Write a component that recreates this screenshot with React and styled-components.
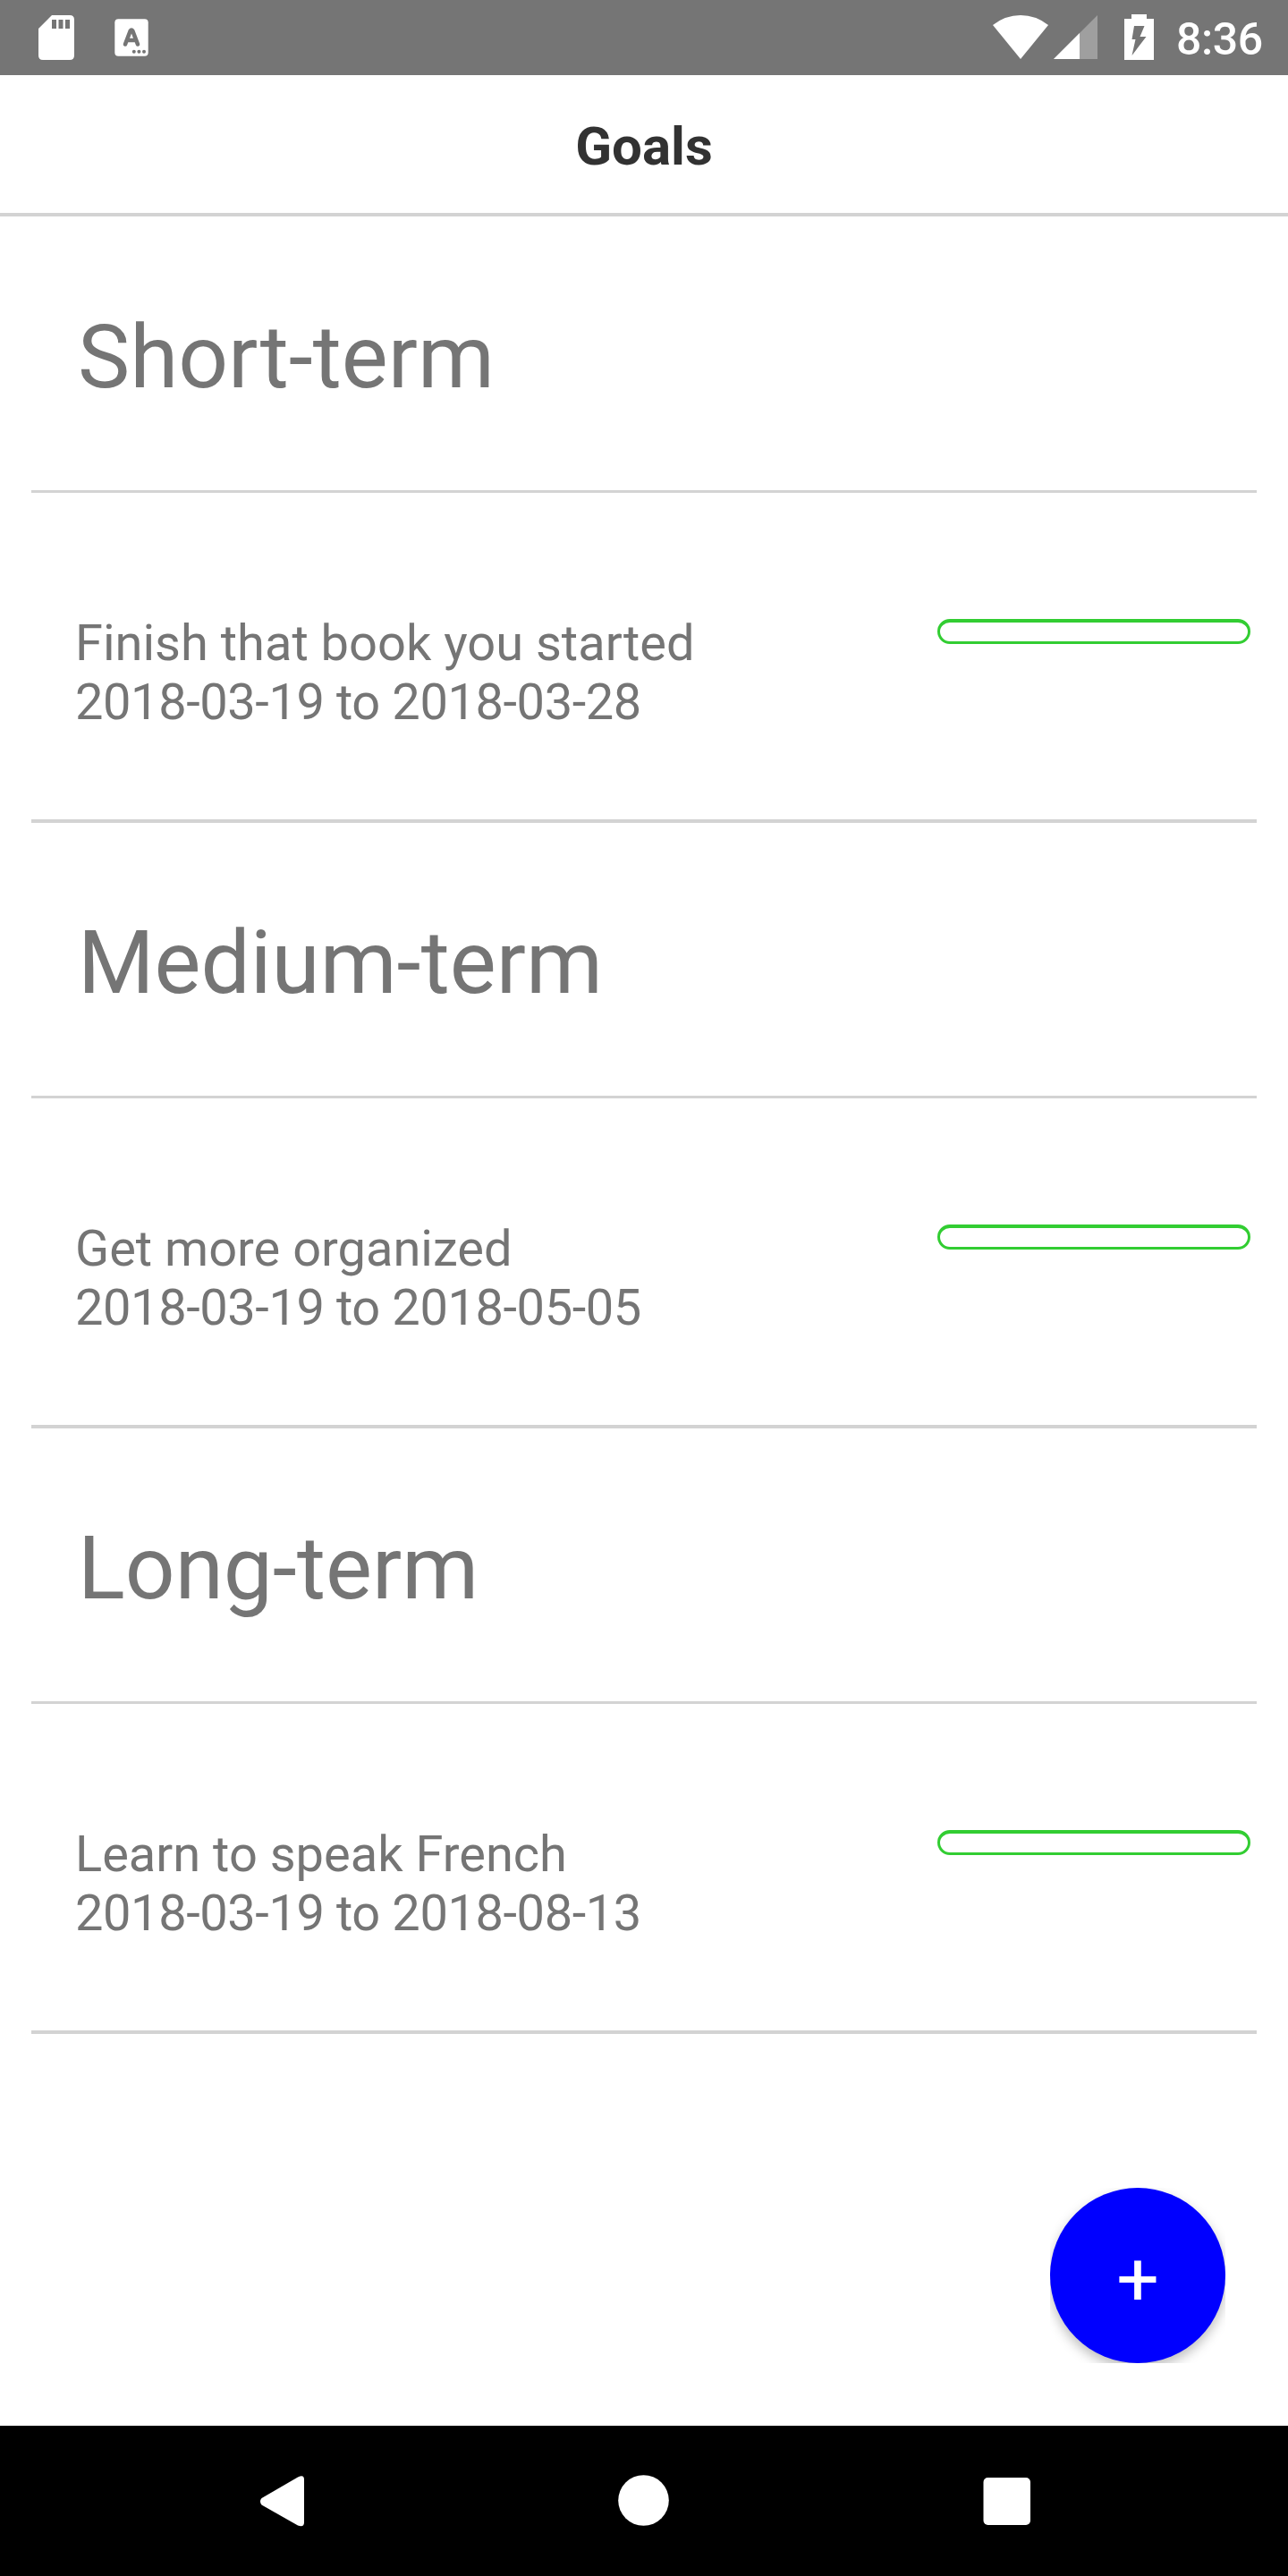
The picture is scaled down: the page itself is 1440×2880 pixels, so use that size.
import React from "react";
import styled, { createGlobalStyle } from "styled-components";

const GlobalStyle = createGlobalStyle`
  *, *::before, *::after { box-sizing: border-box; }
  body { margin: 0; background: #fff; font-family: Roboto, "Liberation Sans", sans-serif; }
`;

const Screen = styled.div`
  position: relative;
  display: flex;
  flex-direction: column;
  width: 1440px;
  height: 2880px;
  background: #fff;
  color: #757575;
  overflow: hidden;
`;

const StatusBar = styled.header`
  display: flex;
  align-items: flex-start;
  justify-content: space-between;
  height: 84px;
  background: #757575;
`;

const Glyph = styled.svg`
  display: block;
  flex: none;
  width: ${(p) => p.$w}px;
  height: ${(p) => p.$h}px;
`;

const StatusGroup = styled.div`
  display: flex;
  align-items: flex-start;
  height: 84px;
`;

const Clock = styled.time`
  width: 125px;
  padding-top: 16px;
  color: #fff;
  font-size: 50px;
  font-weight: 500;
  line-height: 56px;
  letter-spacing: -0.4px;
  white-space: nowrap;
`;

const TitleBar = styled.div`
  display: flex;
  align-items: center;
  justify-content: center;
  height: 158px;
  border-bottom: 4px solid #d3d3d3;
`;

const Title = styled.h1`
  margin: 6px 0 0;
  color: #323232;
  font-size: 60px;
  font-weight: 700;
  line-height: 70px;
`;

const List = styled.main`
  flex: 1;
  display: flex;
  flex-direction: column;
  padding: 1px 35px 0;
`;

const SectionHeader = styled.h2`
  height: 308px;
  margin: 0;
  padding: 99px 0 0 52px;
  border-bottom: 3px solid #d3d3d3;
  font-size: 98px;
  font-weight: 400;
  line-height: 115px;
`;

const GoalRow = styled.article`
  display: flex;
  align-items: flex-start;
  justify-content: space-between;
  height: 369px;
  padding: 135px 7px 0 49px;
  border-bottom: 4px solid #d3d3d3;
`;

const GoalText = styled.div`
  font-size: 56px;
  line-height: 66px;
  white-space: nowrap;
`;

const GoalName = styled.div``;

const GoalDates = styled.div`
  letter-spacing: -0.42px;
`;

const ProgressTrack = styled.div`
  width: 350px;
  height: 28px;
  margin-top: 6px;
  border: 3px solid #32cd32;
  border-top-width: 4px;
  border-radius: 14px;
`;

const Fab = styled.button`
  position: absolute;
  left: 1174px;
  top: 2446px;
  display: flex;
  align-items: center;
  justify-content: center;
  width: 196px;
  height: 196px;
  padding: 10px 0 0;
  border: 0;
  background: transparent;
  overflow: hidden;
`;

const FabDisc = styled.span`
  position: absolute;
  inset: 0;
  border-radius: 50%;
  background: #0000ff;
  box-shadow: 0 6px 13px rgba(0, 0, 0, 0.26);
`;

const FabLabel = styled.span`
  position: relative;
  color: #fff;
  font: 400 84px/98px Roboto, sans-serif;
`;

const NavBar = styled.nav`
  display: flex;
  height: 168px;
  background: #000;
`;

const goals = [
  { term: "Short-term", name: "Finish that book you started", dates: "2018-03-19 to 2018-03-28" },
  { term: "Medium-term", name: "Get more organized", dates: "2018-03-19 to 2018-05-05" },
  { term: "Long-term", name: "Learn to speak French", dates: "2018-03-19 to 2018-08-13" },
];

export default function App() {
  return (
    <Screen>
      <GlobalStyle />
      <StatusBar>
        <Glyph $w={200} $h={84} viewBox="0 0 200 84">
          <path fill="#fff" fillRule="evenodd" d="M58 17H78Q83 17 83 22V62Q83 67 78 67H48Q43 67 43 62V32ZM58 22V32H63V22ZM65.5 22V32H70.5V22ZM73 22V32H78V22Z" />
          <rect x="128.3" y="21.3" width="37.4" height="41.4" rx="4" fill="#fff" />
          <path d="M140 49.5L145.7 34.5Q147 32.5 148.3 34.5L154 49.5M142.5 45H151.5" fill="none" stroke="#757575" strokeWidth="4.6" strokeLinecap="round" strokeLinejoin="round" />
          <circle cx="149.8" cy="57.8" r="2" fill="#757575" />
          <circle cx="155.4" cy="57.8" r="2" fill="#757575" />
          <circle cx="161" cy="57.8" r="2" fill="#757575" />
        </Glyph>
        <StatusGroup>
          <Glyph $w={205} $h={84} viewBox="1110 0 205 84">
            <path fill="#fff" d="M1110 28Q1124 17 1141 17T1172 28L1141 66Z" />
            <path fill="#9f9f9f" d="M1227 17V66H1178Z" />
            <path fill="#fff" d="M1207 37V66H1178Z" />
            <path fill="#fff" d="M1265 16H1282V21H1290V67H1257V21H1265Z" />
            <path fill="#757575" d="M1268 29H1279.5L1274.500 41H1281.5L1265.5 62L1269.500 44H1265.5Z" />
          </Glyph>
          <Clock>8:36</Clock>
        </StatusGroup>
      </StatusBar>
      <TitleBar>
        <Title>Goals</Title>
      </TitleBar>
      <List>
        {goals.map((g) => (
          <section key={g.term}>
            <SectionHeader>{g.term}</SectionHeader>
            <GoalRow>
              <GoalText>
                <GoalName>{g.name}</GoalName>
                <GoalDates>{g.dates}</GoalDates>
              </GoalText>
              <ProgressTrack />
            </GoalRow>
          </section>
        ))}
      </List>
      <NavBar>
        <Glyph $w={1440} $h={168} viewBox="0 2712 1440 168">
          <path fill="#fff" d="M292.5 2793L333 2769.5Q340 2766 340 2772V2820Q340 2826 333 2823.5L292.5 2800.5Q289.5 2796.5 292.5 2793Z" />
          <circle cx="719.5" cy="2795.5" r="28.3" fill="#fff" />
          <rect x="1099.5" y="2770" width="52.5" height="53" rx="5" fill="#fff" />
        </Glyph>
      </NavBar>
      <Fab aria-label="Add goal">
        <FabDisc />
        <FabLabel>+</FabLabel>
      </Fab>
    </Screen>
  );
}
